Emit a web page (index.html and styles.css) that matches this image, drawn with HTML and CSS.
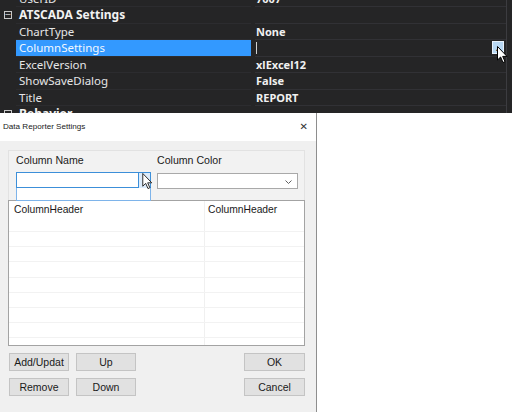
FILE: index.html
```html
<!DOCTYPE html>
<html>
<head>
<meta charset="utf-8">
<link rel="stylesheet" href="styles.css">
</head>
<body>
<div class="page">
  <div class="ide">
    <div class="rows">
      <div class="row"><span class="gut"></span><span class="name">UserID</span><span class="val">7007</span></div>
      <div class="row cat"><span class="gut"><span class="box">−</span></span><span class="name">ATSCADA Settings</span><span class="val"></span></div>
      <div class="row"><span class="gut"></span><span class="name">ChartType</span><span class="val">None</span></div>
      <div class="row sel"><span class="gut"></span><span class="name">ColumnSettings</span><span class="val"><span class="caret"></span><span class="dots">...</span></span></div>
      <div class="row"><span class="gut"></span><span class="name">ExcelVersion</span><span class="val">xlExcel12</span></div>
      <div class="row"><span class="gut"></span><span class="name">ShowSaveDialog</span><span class="val">False</span></div>
      <div class="row"><span class="gut"></span><span class="name">Title</span><span class="val">REPORT</span></div>
      <div class="row cat"><span class="gut"><span class="box">−</span></span><span class="name">Behavior</span><span class="val"></span></div>
    </div>
    <svg class="cursor cur1" width="11" height="18" viewBox="0 0 11 18"><path d="M0.5 0.5 L0.5 14 L3.6 11 L6 16.5 L8 15.6 L5.7 10.4 L10 10.4 Z" fill="#fff" stroke="#000" stroke-width="1"/></svg>
  </div>
  <div class="lower">
    <div class="dialog">
      <div class="titlebar"><span class="title">Data Reporter Settings</span><span class="close">✕</span></div>
      <div class="body">
        <div class="group">
          <div class="field f1">
            <div class="label">Column Name</div>
            <div class="combo focus"><span class="ddbtn"></span></div>
            <div class="droplist"></div>
          </div>
          <div class="field f2">
            <div class="label">Column Color</div>
            <div class="combo"><svg class="chev" width="7" height="4" viewBox="0 0 7 4"><path d="M0.5 0.5 L3.5 3.5 L6.5 0.5" fill="none" stroke="#606060" stroke-width="1"/></svg></div>
          </div>
          <svg class="cursor cur2" width="11" height="17" viewBox="0 0 11 18"><path d="M0.5 0.5 L0.5 14 L3.6 11 L6 16.5 L8 15.6 L5.7 10.4 L10 10.4 Z" fill="#fff" stroke="#222" stroke-width="1"/></svg>
        </div>
        <div class="list">
          <div class="lhead"><span class="c1">ColumnHeader</span><span class="c2">ColumnHeader</span></div>
          <div class="lrow"><span class="c1"></span><span class="c2"></span></div>
          <div class="lrow"><span class="c1"></span><span class="c2"></span></div>
          <div class="lrow"><span class="c1"></span><span class="c2"></span></div>
          <div class="lrow"><span class="c1"></span><span class="c2"></span></div>
          <div class="lrow"><span class="c1"></span><span class="c2"></span></div>
          <div class="lrow"><span class="c1"></span><span class="c2"></span></div>
          <div class="lrow"><span class="c1"></span><span class="c2"></span></div>
          <div class="lrow"><span class="c1"></span><span class="c2"></span></div>
        </div>
        <div class="buttons">
          <div class="bcol">
            <button class="btn">Add/Updat</button>
            <button class="btn">Remove</button>
          </div>
          <div class="bcol">
            <button class="btn">Up</button>
            <button class="btn">Down</button>
          </div>
          <div class="bcol right">
            <button class="btn">OK</button>
            <button class="btn">Cancel</button>
          </div>
        </div>
      </div>
    </div>
    <div class="blank"></div>
  </div>
</div>
</body>
</html>
```
FILE: styles.css
```css
html, body {
  margin: 0;
  padding: 0;
  background: #ffffff;
}
.page {
  width: 512px;
  height: 412px;
  overflow: hidden;
  display: flex;
  flex-direction: column;
}
.ide {
  height: 113px;
  flex: none;
  background: #252526;
  overflow: hidden;
  position: relative;
  font-family: "Noto Sans", "Open Sans", sans-serif;
  font-size: 11.5px;
  color: #e6e6e6;
}
.rows {
  margin-top: -9.5px;
  width: 506px;
  border-right: 1px solid #3c3c40;
}
.row {
  height: 16.5px;
  display: flex;
  align-items: stretch;
  box-sizing: border-box;
}
.gut {
  width: 16px;
  flex: none;
  display: flex;
  align-items: center;
  justify-content: center;
}
.box {
  width: 8px;
  height: 8px;
  border: 1px solid #c8c8c8;
  box-sizing: border-box;
  font-size: 8px;
  line-height: 5px;
  text-align: center;
  color: #e0e0e0;
  font-family: "DejaVu Sans", sans-serif;
  margin-left: -1px;
}
.name {
  width: 235px;
  flex: none;
  padding-left: 3px;
  line-height: 16.5px;
  box-sizing: border-box;
  white-space: nowrap;
  border-bottom: 1px solid #2c2c2f;
}
.val {
  flex: 1;
  margin-left: 4px;
  padding-left: 1px;
  line-height: 16.5px;
  font-weight: 700;
  font-size: 11px;
  color: #f0f0f0;
  border-bottom: 1px solid #313135;
  box-sizing: border-box;
  position: relative;
  white-space: nowrap;
}
.cat .name {
  font-weight: 700;
  font-size: 12px;
  color: #f2f2f2;
  padding-left: 3px;
}
.sel .name {
  background: #3399ff;
  color: #f2f8ff;
}
.caret {
  display: inline-block;
  width: 1px;
  height: 12px;
  background: #d0d0d0;
  vertical-align: middle;
  margin-top: -2px;
}
.dots {
  position: absolute;
  right: 2px;
  top: 1px;
  width: 12px;
  height: 13px;
  box-sizing: border-box;
  border: 1px solid #e8f2fc;
  background: #b7d7f3;
  color: #1a1a1a;
  font-size: 9px;
  line-height: 12px;
  text-align: center;
  font-weight: 700;
  letter-spacing: -1px;
}
.cursor {
  position: absolute;
}
.cur1 {
  left: 497px;
  top: 46px;
}
.lower {
  flex: 1;
  display: flex;
}
.dialog {
  width: 316px;
  flex: none;
  border-right: 1px solid #8e8e8e;
  display: flex;
  flex-direction: column;
  font-family: "Liberation Sans", Arial, sans-serif;
  color: #1a1a1a;
}
.titlebar {
  height: 27px;
  background: #ffffff;
  display: flex;
  align-items: center;
  justify-content: space-between;
  padding: 0 8px 1px 3px;
}
.title {
  font-size: 8.1px;
  color: #1a1a1a;
}
.close {
  font-family: "DejaVu Sans", sans-serif;
  font-size: 10px;
  color: #333;
}
.body {
  flex: 1;
  background: #f0f0f0;
  padding: 9px 0 0 8px;
}
.group {
  width: 297px;
  height: 51px;
  box-sizing: border-box;
  border: 1px solid #e2e2e2;
  border-bottom: none;
  background: #f2f2f2;
  display: flex;
  padding: 0 0 0 7px;
  position: relative;
}
.field {
  display: flex;
  flex-direction: column;
}
.f1 {
  width: 135px;
}
.f2 {
  width: 141px;
  margin-left: 6px;
}
.label {
  font-size: 10.6px;
  height: 12px;
  line-height: 12px;
  margin-top: 3px;
  margin-bottom: 5px;
  white-space: nowrap;
}
.combo {
  height: 17px;
  box-sizing: border-box;
  border: 1px solid #a9a9a9;
  background: #ffffff;
  position: relative;
}
.f1 .combo {
  margin-top: 1px;
}
.f2 .combo {
  margin-top: 2px;
  height: 16px;
}
.combo.focus {
  border-color: #3c8fd9;
}
.ddbtn {
  position: absolute;
  right: 0;
  top: 0;
  width: 11px;
  height: 15px;
  background: #dcecfc;
  border-left: 1px solid #3c8fd9;
}
.chev {
  position: absolute;
  right: 5px;
  top: 6px;
}
.droplist {
  height: 13px;
  box-sizing: border-box;
  border: 1px solid #7eb4ea;
  border-top: none;
  background: #ffffff;
  margin-top: 0;
  position: relative;
  z-index: 2;
}
.cur2 {
  left: 133px;
  top: 22px;
  z-index: 3;
}
.list {
  width: 297px;
  height: 146px;
  box-sizing: border-box;
  border: 1px solid #a3a3a3;
  background: #ffffff;
  position: relative;
  z-index: 1;
  margin-top: -1px;
  overflow: hidden;
}
.lhead, .lrow {
  display: flex;
}
.lhead {
  height: 31px;
  font-size: 10.3px;
  line-height: 18px;
  border-bottom: 1px solid #f2f2f2;
  box-sizing: border-box;
}
.lrow {
  height: 15.2px;
  border-bottom: 1px solid #f2f2f2;
  box-sizing: border-box;
}
.c1 {
  width: 196px;
  flex: none;
  box-sizing: border-box;
  padding-left: 5px;
  border-right: 1px solid #f0f0f0;
}
.c2 {
  flex: 1;
  padding-left: 3px;
}
.buttons {
  display: flex;
  margin-top: 7px;
  padding-left: 1px;
  width: 296px;
}
.bcol {
  display: flex;
  flex-direction: column;
  gap: 7px;
  margin-right: 7px;
}
.bcol.right {
  margin-left: auto;
  margin-right: 0;
}
.btn {
  width: 60px;
  height: 18px;
  box-sizing: border-box;
  border: 1px solid #c4c4c4;
  background: #e1e1e1;
  font-family: "Liberation Sans", Arial, sans-serif;
  font-size: 10.5px;
  color: #1a1a1a;
  padding: 0;
  margin: 0;
  line-height: 16px;
}
.bcol.right .btn {
  width: 61px;
}
.blank {
  flex: 1;
  background: #ffffff;
}
```
